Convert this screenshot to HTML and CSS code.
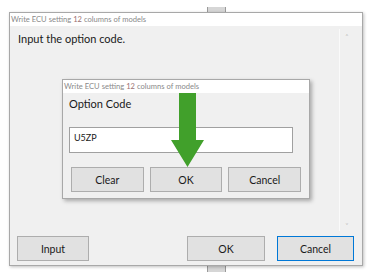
FILE: index.html
```html
<!DOCTYPE html>
<html lang="en">
<head>
    <meta charset="UTF-8">
    <title>Write ECU setting</title>
    <link rel="stylesheet" href="styles.css">
</head>
<body>
    <div class="back-thumb top"></div>
    <div class="back-thumb bottom"></div>

    <div class="window main-window">
        <div class="title-bar">Write ECU setting <span class="num">12</span> columns of models</div>
        <div class="window-body">
            <div class="message-area">
                <div class="message">Input the option code.</div>
                <div class="scrollbar">
                    <span class="arrow-up">&#708;</span>
                    <span class="arrow-down">&#709;</span>
                </div>
            </div>
            <div class="button-row">
                <button class="btn">Input</button>
                <div class="spacer"></div>
                <button class="btn">OK</button>
                <button class="btn default">Cancel</button>
            </div>
        </div>
    </div>

    <div class="window option-dialog">
        <div class="title-bar">Write ECU setting <span class="num">12</span> columns of models</div>
        <div class="dialog-body">
            <div class="label">Option Code</div>
            <div class="code-input">U5ZP</div>
            <div class="dialog-buttons">
                <button class="btn">Clear</button>
                <button class="btn">OK</button>
                <button class="btn">Cancel</button>
            </div>
        </div>
    </div>

    <svg class="pointer" width="33" height="74" viewBox="0 0 33 74">
        <path d="M8 0 H25 V47 H33 L16.5 74 L0 47 H8 Z" fill="#41a02b"/>
    </svg>
</body>
</html>
```

FILE: styles.css
```css
:root {
    --window-bg: #f0f0f0;
    --border: #a8a8a8;
    --btn-bg: #e1e1e1;
    --btn-border: #adadad;
    --accent: #0078d7;
}

body {
    margin: 0;
    width: 375px;
    height: 280px;
    position: relative;
    background: #ffffff;
    font-family: Lato, "Noto Sans", sans-serif;
    color: #1a1a1a;
    overflow: hidden;
}

.back-thumb {
    position: absolute;
    left: 207px;
    width: 17px;
    height: 6px;
    background: #d6d6d6;
    border-left: 1px solid #9a9a9a;
    border-right: 1px solid #9a9a9a;
}

.back-thumb.top {
    top: 7px;
}

.back-thumb.bottom {
    top: 266px;
}

.window {
    position: absolute;
    background: var(--window-bg);
    border: 1px solid var(--border);
    box-sizing: border-box;
    display: flex;
    flex-direction: column;
}

.main-window {
    left: 9px;
    top: 12px;
    width: 354px;
    height: 254px;
    box-shadow: 1px 1px 3px rgba(0, 0, 0, 0.25);
}

.title-bar {
    height: 13px;
    background: #ffffff;
    font-size: 7.6px;
    line-height: 13px;
    color: #8a8a8a;
    padding-left: 1px;
    flex: none;
    white-space: nowrap;
}

.title-bar .num {
    color: #9a7070;
}

.window-body {
    flex: 1;
    display: flex;
    flex-direction: column;
    padding: 3px 8px 4px 7px;
}

.message-area {
    flex: 1;
    display: flex;
}

.message {
    flex: 1;
    font-size: 11px;
    padding-top: 3px;
    padding-left: 1px;
}

.scrollbar {
    width: 14px;
    border-left: 1px solid #fafafa;
    margin-bottom: 2px;
    display: flex;
    flex-direction: column;
    justify-content: space-between;
    align-items: center;
    color: #b8b8b8;
    font-size: 6px;
    line-height: 8px;
    padding: 3px 0 2px;
}

.button-row {
    display: flex;
    gap: 12px;
    height: 25px;
    margin-top: 3px;
}

.spacer {
    flex: 1;
}

.btn {
    width: 72px;
    height: 25px;
    background: var(--btn-bg);
    border: 1px solid var(--btn-border);
    font-family: inherit;
    font-size: 10.5px;
    color: #1a1a1a;
    padding: 0;
}

.button-row .btn:nth-child(3) {
    width: 78px;
}

.button-row .btn.default {
    width: 77px;
    border-color: var(--accent);
}

.option-dialog {
    left: 62px;
    top: 79px;
    width: 248px;
    height: 120px;
    box-shadow: 2px 2px 4px rgba(0, 0, 0, 0.3);
}

.dialog-body {
    flex: 1;
    padding: 3px 8px 0 6px;
    display: flex;
    flex-direction: column;
}

.label {
    font-size: 11px;
    height: 16px;
    line-height: 16px;
}

.code-input {
    margin-top: 15px;
    width: 224px;
    height: 26px;
    box-sizing: border-box;
    background: #ffffff;
    border: 1px solid #a0a0a0;
    font-size: 9px;
    padding: 4px 0 0 4px;
}

.dialog-buttons {
    display: flex;
    gap: 6px;
    margin-top: 14px;
    padding-left: 2px;
}

.dialog-buttons .btn {
    width: 73px;
}

.pointer {
    position: absolute;
    left: 171px;
    top: 93px;
}
```
